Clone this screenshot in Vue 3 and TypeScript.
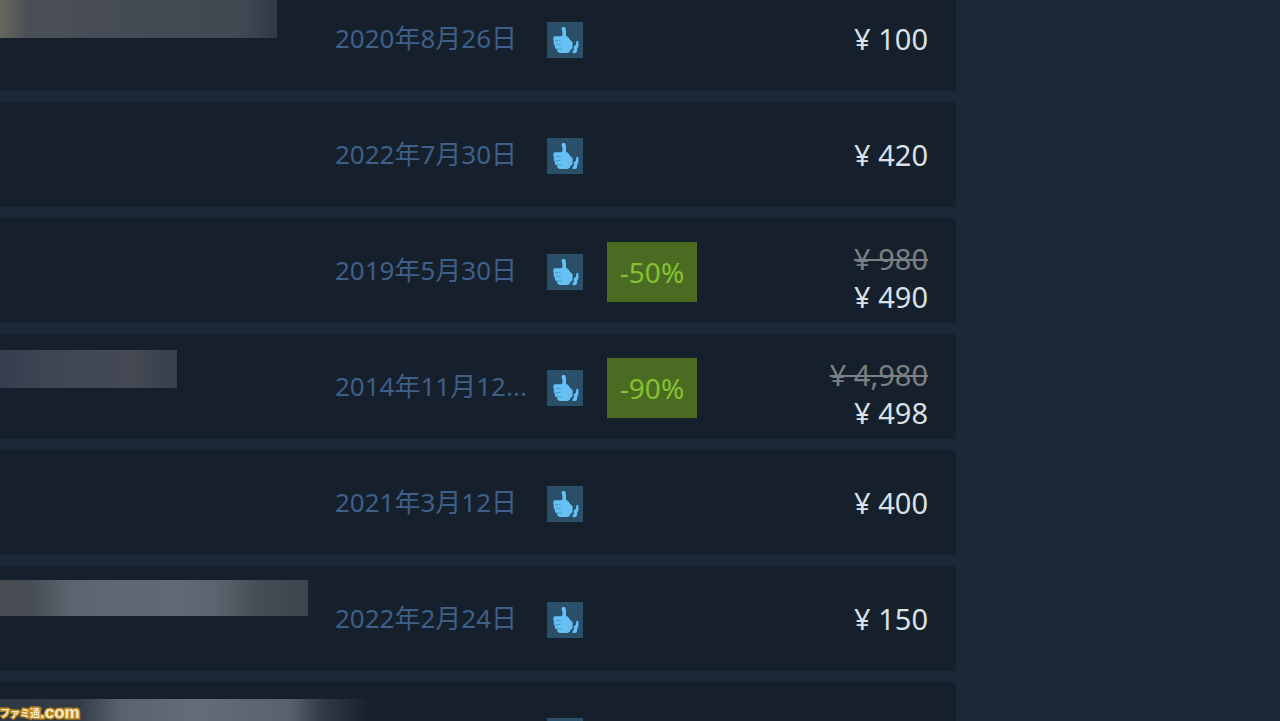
<script setup lang="ts">
interface Item {
  id: number
  date: string
  price: string
  oldPrice?: string
  discount?: string
  mask?: string
}

const items: Item[] = [
  { id: 1, date: '2020年8月26日', price: '¥ 100', mask: 'mask-first' },
  { id: 2, date: '2022年7月30日', price: '¥ 420' },
  { id: 3, date: '2019年5月30日', price: '¥ 490', oldPrice: '¥ 980', discount: '-50%' },
  { id: 4, date: '2014年11月12...', price: '¥ 498', oldPrice: '¥ 4,980', discount: '-90%', mask: 'mask-short' },
  { id: 5, date: '2021年3月12日', price: '¥ 400' },
  { id: 6, date: '2022年2月24日', price: '¥ 150', mask: 'mask-light' },
  { id: 7, date: '', price: '', mask: 'mask-fade' },
]
</script>

<template>
  <main class="page">
    <div class="list">
      <a v-for="item in items" :key="item.id" class="row" href="#">
        <div class="name"><div v-if="item.mask" class="mask" :class="item.mask"></div></div>
        <div class="date">{{ item.date }}</div>
        <svg class="review" viewBox="0 0 36 36" aria-hidden="true">
          <rect width="36" height="36" fill="#2b4f68" />
          <path
            fill="#66c0f4"
            d="M15.6 5H18L19 8V13.6L21.4 15.4L23.2 18L25.6 20V26.6L23 28.2V29.8L20.6 31H12.6L10.4 29.8V27.6L8.2 26.4L7.8 23.4L6.8 22.6V19.4L6.4 18.4V15L8 14.2H14.4L15.6 12.4L15.2 9L14.4 6.6Z"
          />
          <path fill="#66c0f4" d="M29.4 19H31.4V24.6L30.4 26.2L29.8 30L28.6 31H25.6V29L27 27.6L26.8 24L28.8 23Z" />
          <path fill="none" stroke="#4b9cce" stroke-width="1" d="M8 18.4H13.6M8 22.6H13.6M9.6 26.8H15" />
        </svg>
        <div class="discount"><span v-if="item.discount" class="badge">{{ item.discount }}</span></div>
        <div class="price" :class="{ sale: item.oldPrice }">
          <s v-if="item.oldPrice">{{ item.oldPrice }}</s>
          <span>{{ item.price }}</span>
        </div>
      </a>
    </div>
    <div class="brand"><span class="brand-name">ファミ通</span><span class="brand-domain">.com</span></div>
  </main>
</template>

<style>
body {
  margin: 0;
  background: #1b2838;
}
</style>

<style scoped>
.page {
  position: relative;
  height: 100vh;
  overflow: hidden;
  padding-right: 324px;
  box-sizing: border-box;
  background: #1b2838;
  font-family: "Noto Sans", "Noto Sans CJK JP", sans-serif;
}
.list {
  display: flex;
  flex-direction: column;
  gap: 11px;
  margin-top: -14px;
}
.row {
  display: grid;
  grid-template-columns: minmax(0, 1fr) 184px 36px 90px 207px;
  column-gap: 24px;
  align-items: center;
  min-height: 105px;
  padding: 3px 28px 0 0;
  box-sizing: border-box;
  background: #16202c;
  color: #d9e1e6;
  text-decoration: none;
}
.name {
  align-self: start;
  margin-right: -24px;
}
.date {
  margin-left: -4px;
  padding-bottom: 5px;
  color: #3e5f87;
  font-size: 26px;
  font-weight: 400;
  line-height: 36px;
  white-space: nowrap;
}
.review {
  display: block;
  width: 36px;
  height: 36px;
}
.badge {
  display: block;
  background: #4c6b22;
  color: #86c232;
  font-size: 28px;
  line-height: 60px;
  text-align: center;
}
.price {
  display: flex;
  flex-direction: column;
  align-items: flex-end;
  padding-bottom: 2px;
  font-size: 29px;
  line-height: 38px;
  white-space: nowrap;
}
.price s {
  color: #7c8083;
  text-decoration-thickness: 2px;
}
.sale {
  padding-top: 14px;
}
.mask {
  height: 38px;
  margin-top: 12px;
}
.mask-first {
  width: 277px;
  margin-top: 11px;
  background: linear-gradient(90deg, #68675d 0, #4a4f57 28px, #454b55 50%, #424852 88%, #303844 100%);
}
.mask-short {
  width: 177px;
  margin-top: 13px;
  background: linear-gradient(90deg, #363d50 0, #414853 40%, #444954 75%, #383f4a 100%);
}
.mask-light {
  width: 308px;
  margin-top: 11px;
  height: 36px;
  background: linear-gradient(90deg, #484b51 0, #464c54 28px, #5e6570 75px, #626874 180px, #5d636e 215px, #464c55 260px, #3e444e 100%);
}
.mask-fade {
  width: 370px;
  margin-top: 14px;
  background: linear-gradient(90deg, #2e3742 0, #333c47 80px, #5c626d 120px, #656b77 200px, #5b616b 290px, #333c48 320px, #16202c 100%);
}
.brand {
  position: absolute;
  left: 0;
  bottom: 0;
  display: flex;
  align-items: center;
  height: 16px;
  color: #f4ead0;
  font-weight: 700;
  line-height: 16px;
  paint-order: stroke fill;
  -webkit-text-stroke: 3px #c08a20;
}
.brand-name {
  font-family: "Noto Sans CJK JP", sans-serif;
  font-size: 10px;
}
.brand-domain {
  font-family: "Liberation Sans", sans-serif;
  font-size: 17px;
}
</style>
